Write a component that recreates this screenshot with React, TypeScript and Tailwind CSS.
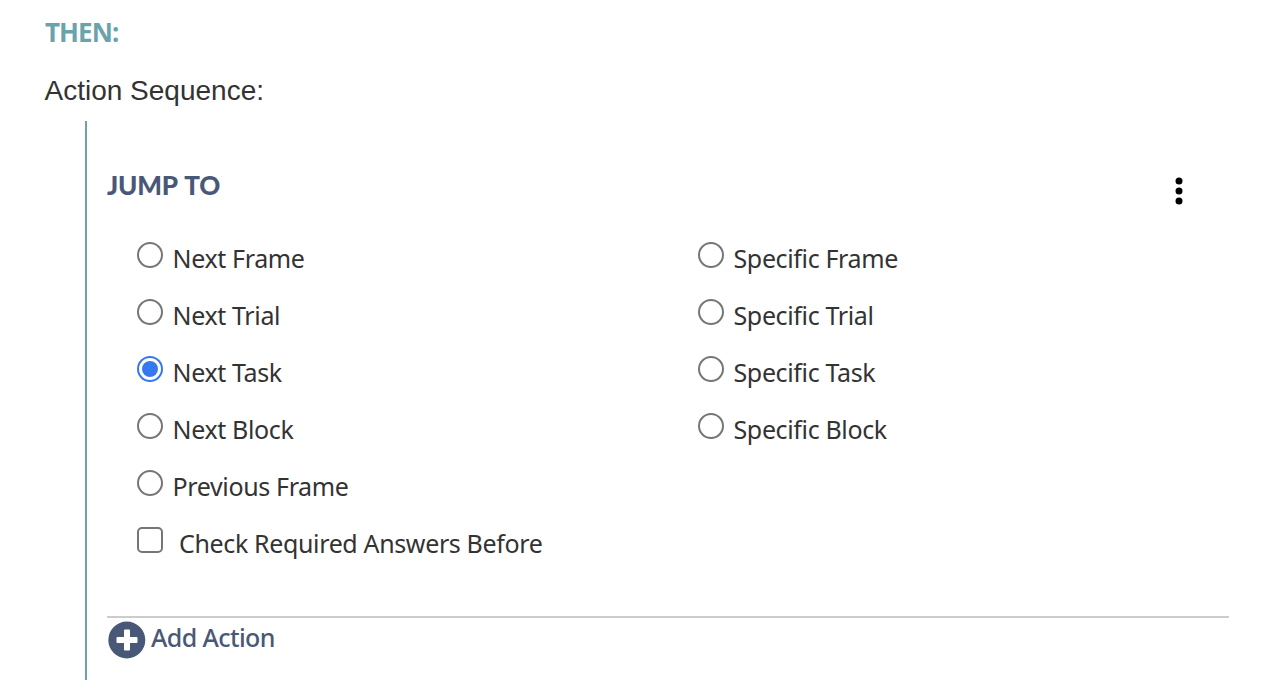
import React, { useState } from 'react';

const nextTargets = ['Next Frame', 'Next Trial', 'Next Task', 'Next Block', 'Previous Frame'];
const specificTargets = ['Specific Frame', 'Specific Trial', 'Specific Task', 'Specific Block'];

type TargetProps = {
  label: string;
  checked: boolean;
  onSelect: (label: string) => void;
};

function TargetOption({ label, checked, onSelect }: TargetProps) {
  return (
    <label className="flex h-[57px] items-center">
      <input type="radio" name="target" className="sr-only" checked={checked} onChange={() => onSelect(label)} />
      <span
        className={`mb-[7px] flex size-[26px] shrink-0 items-center justify-center rounded-full border-2 ${
          checked ? 'border-[#3578f0]' : 'border-[#767676]'
        }`}
      >
        {checked && <span className="size-4 rounded-full bg-[#3578f0]" />}
      </span>
      <span className="ml-[9.500px] whitespace-nowrap">{label}</span>
    </label>
  );
}

function App() {
  const [target, setTarget] = useState('Next Task');
  const [checkAnswers, setCheckAnswers] = useState(false);

  return (
    <main className="h-[694px] bg-white pl-11 pt-4 font-['Noto_Sans',sans-serif] text-[25px] tracking-[-0.36px] text-[#333333]">
      <h2 className="pl-px text-[26px] leading-8 font-bold tracking-[-0.9px] text-[#6ba3ad]">THEN:</h2>
      <p className="mt-[27px] pl-[0.5px] font-['Liberation_Sans',sans-serif] text-[28px] leading-8 tracking-normal">
        Action Sequence:
      </p>

      <section className="mt-[14px] ml-[41px] h-[559px] w-[1144px] border-l-2 border-[#6ba3ad] pl-5">
        <div className="flex h-[109px] justify-between pt-12">
          <h3 className="font-['Lato',sans-serif] text-[26px] leading-8 font-black tracking-[-0.2px] [word-spacing:2px] text-[#4a5878]">
            JUMP TO
          </h3>
          <button type="button" aria-label="Action menu" className="mt-2 mr-[46px] h-7 w-2">
            <svg viewBox="0 0 8 28" className="h-7 w-2">
              <circle cx="4" cy="4" r="3.5" />
              <circle cx="4" cy="14" r="3.5" />
              <circle cx="4" cy="24" r="3.5" />
            </svg>
          </button>
        </div>

        <div className="grid h-[285px] grid-cols-[561px_1fr] pl-[30px]">
          <div>
            {nextTargets.map((label) => (
              <TargetOption key={label} label={label} checked={target === label} onSelect={setTarget} />
            ))}
          </div>
          <div>
            {specificTargets.map((label) => (
              <TargetOption key={label} label={label} checked={target === label} onSelect={setTarget} />
            ))}
          </div>
        </div>

        <label className="ml-[30px] flex h-[57px] items-center">
          <input
            type="checkbox"
            className="sr-only"
            checked={checkAnswers}
            onChange={() => setCheckAnswers((prev) => !prev)}
          />
          <span
            className={`mb-[7px] size-[26px] shrink-0 rounded-[5px] border-2 border-[#767676] ${
              checkAnswers ? 'bg-[#3578f0]' : ''
            }`}
          />
          <span className="ml-4 whitespace-nowrap">Check Required Answers Before</span>
        </label>

        <div className="mt-11 border-t-2 border-[#cccccc] pt-1">
          <button type="button" className="flex items-start font-medium tracking-[-0.6px] text-[#4a5878]">
            <svg viewBox="0 0 40 38" className="h-[38px] w-10 overflow-visible">
              <circle cx="19.8" cy="18" r="18.5" fill="currentColor" />
              <path
                d="M18 7.500h4a1 1 0 0 1 1 1V15h6.500a1 1 0 0 1 1 1v4a1 1 0 0 1-1 1H23v6.500a1 1 0 0 1-1 1h-4a1 1 0 0 1-1-1V21h-6.500a1 1 0 0 1-1-1v-4a1 1 0 0 1 1-1H17V8.500a1 1 0 0 1 1-1z"
                fill="#fff"
              />
            </svg>
            <span className="ml-1 leading-[30px]">Add Action</span>
          </button>
        </div>
      </section>
    </main>
  );
}

export default App;
